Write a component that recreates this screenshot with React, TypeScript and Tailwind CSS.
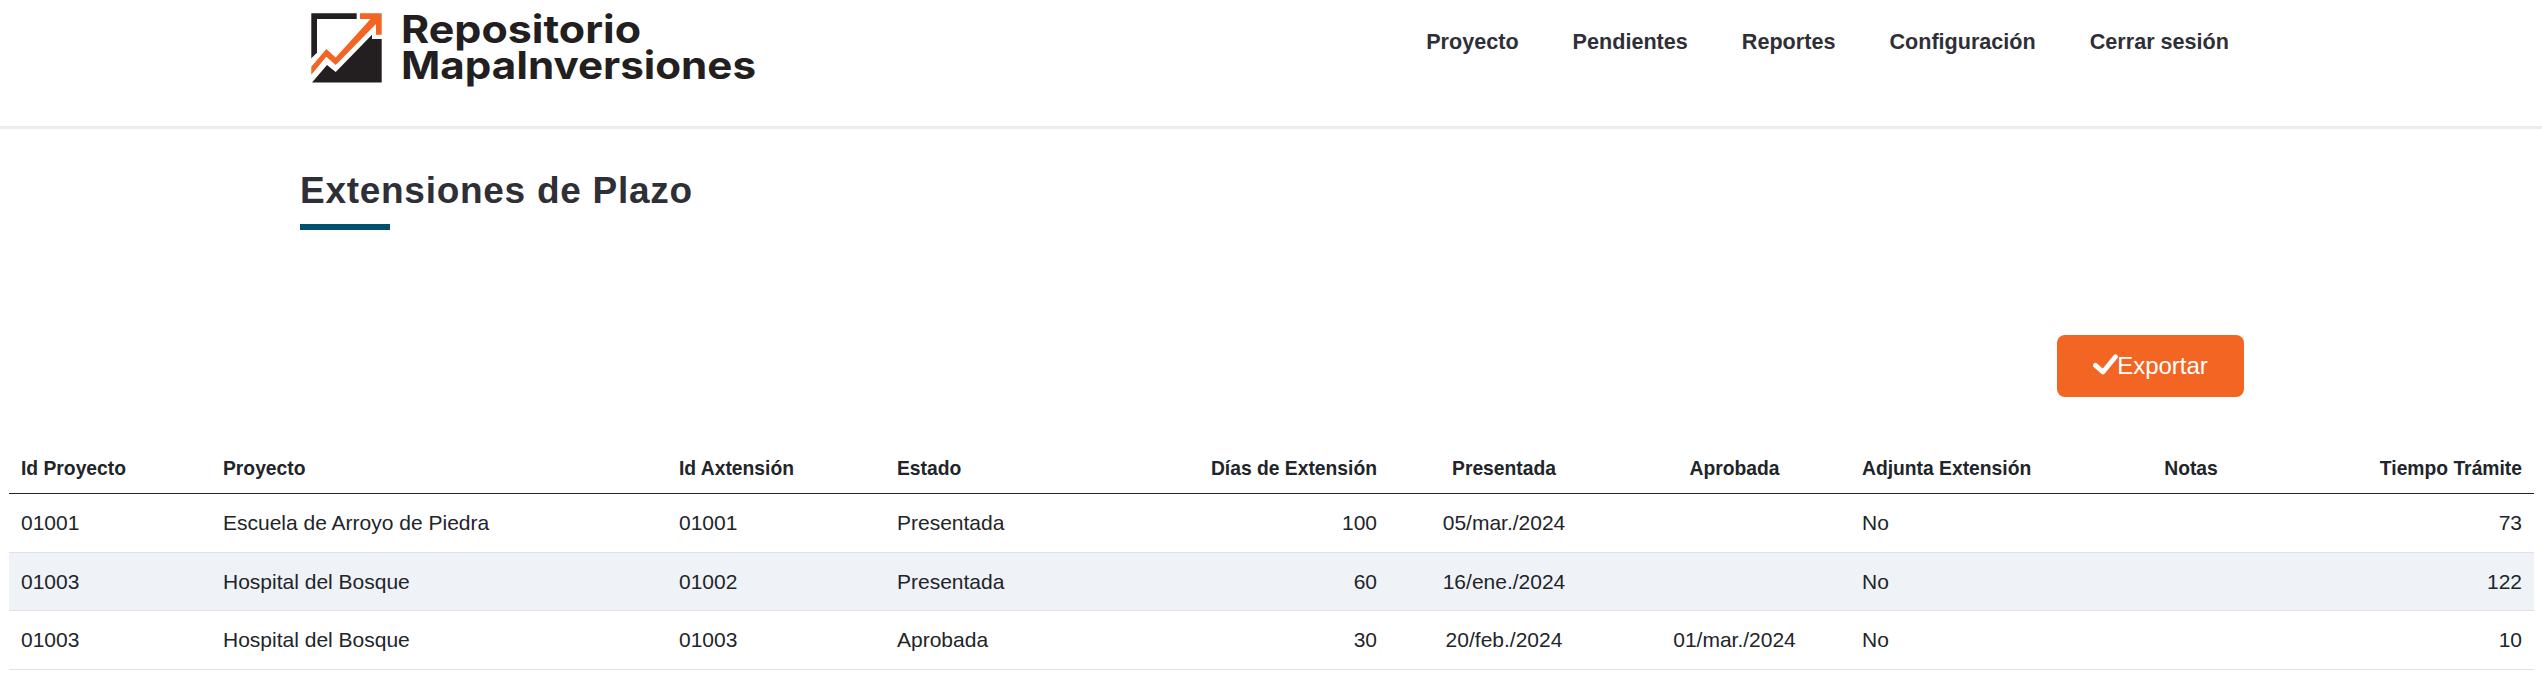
const navItems = ['Proyecto', 'Pendientes', 'Reportes', 'Configuración', 'Cerrar sesión'];

type Align = 'left' | 'center' | 'right';

const alignClass: Record<Align, string> = {
  left: 'text-left',
  center: 'text-center',
  right: 'text-right',
};

const columns: { title: string; align: Align; width: string }[] = [
  { title: 'Id Proyecto', align: 'left', width: 'w-[202px]' },
  { title: 'Proyecto', align: 'left', width: 'w-[456px]' },
  { title: 'Id Axtensión', align: 'left', width: 'w-[218px]' },
  { title: 'Estado', align: 'left', width: 'w-[268px]' },
  { title: 'Días de Extensión', align: 'right', width: 'w-[236px]' },
  { title: 'Presentada', align: 'center', width: 'w-[230px]' },
  { title: 'Aprobada', align: 'center', width: 'w-[231px]' },
  { title: 'Adjunta Extensión', align: 'left', width: 'w-[225px]' },
  { title: 'Notas', align: 'center', width: 'w-[232px]' },
  { title: 'Tiempo Trámite', align: 'right', width: 'w-[227px]' },
];

const rows = [
  ['01001', 'Escuela de Arroyo de Piedra', '01001', 'Presentada', '100', '05/mar./2024', '', 'No', '', '73'],
  ['01003', 'Hospital del Bosque', '01002', 'Presentada', '60', '16/ene./2024', '', 'No', '', '122'],
  ['01003', 'Hospital del Bosque', '01003', 'Aprobada', '30', '20/feb./2024', '01/mar./2024', 'No', '', '10'],
];

function Logo() {
  return (
    <svg width="460" height="96" viewBox="0 0 460 96" role="img">
      <path fill="#231f20" d="M1.3 13.3H46.7V19H7V52.7L1.3 58.3Z" />
      <path fill="#231f20" d="M2 82.4H71.7V39H62V34.7L25.7 72L17 65Z" />
      <path fill="#f26522" d="M50 13.3H71.7V34.7H66V24L25.7 65L16.3 56.7L1.3 74.7V66.8L16.3 49L25.7 57.5L60.5 19H50Z" />
      <g fill="#231f20" fontFamily="Inter, sans-serif" fontWeight="700" fontSize="38.5">
        <text x="91" y="43.4" textLength="240" lengthAdjust="spacingAndGlyphs">Repositorio</text>
        <text x="91" y="79.3" textLength="355" lengthAdjust="spacingAndGlyphs">MapaInversiones</text>
      </g>
    </svg>
  );
}

export default function App() {
  return (
    <div className="h-[676px] w-full overflow-hidden bg-white font-['Liberation_Sans',Arial,sans-serif] text-[#212529]">
      <header className="h-[129px] border-b-[3px] border-[#ececec]">
        <div className="mx-auto flex w-[1922px] items-start justify-between">
          <Logo />
          <nav className="flex gap-[54px] pt-[29px] pr-[3px] text-[21.6px] leading-[25px] font-bold text-[#2f2f37]">
            {navItems.map((item) => (
              <a key={item}>{item}</a>
            ))}
          </nav>
        </div>
      </header>

      <main>
        <div className="ml-[300px] flex w-[1944px] flex-col">
          <h1 className="mt-10 text-[37px] leading-[44px] font-bold tracking-[0.72px] text-[#2f2f37]">
            Extensiones de Plazo
          </h1>
          <div className="mt-[11px] h-[6px] w-[90px] bg-[#00506f]" />
          <button className="mt-[105px] flex h-[62px] w-[187px] items-center justify-center self-end rounded-lg bg-[#f26522] text-2xl text-white">
            <svg width="25" height="26" viewBox="0 0 25 26" fill="none">
              <path d="M2.5 12.4L10 19L22.5 3.8" stroke="white" strokeWidth="4.8" strokeLinecap="round" strokeLinejoin="round" />
            </svg>
            <span className="-ml-px">Exportar</span>
          </button>
        </div>

        <table className="mt-[49px] ml-[9px] w-[2525px] table-fixed border-separate border-spacing-0">
          <thead>
            <tr className="h-12 text-[19.3px] leading-6">
              {columns.map((c) => (
                <th key={c.title} className={`${c.width} ${alignClass[c.align]} border-b border-[#212529] px-3 pb-px font-bold whitespace-nowrap`}>
                  {c.title}
                </th>
              ))}
            </tr>
          </thead>
          <tbody>
            {rows.map((row, r) => (
              <tr key={r} className="h-[59px] text-[21px] leading-6 even:h-[58px] even:bg-[#eff3f8]">
                {row.map((cell, i) => (
                  <td key={i} className={`${alignClass[columns[i].align]} border-b border-[#dee2e6] px-3 whitespace-nowrap`}>
                    {cell}
                  </td>
                ))}
              </tr>
            ))}
          </tbody>
        </table>
      </main>
    </div>
  );
}
